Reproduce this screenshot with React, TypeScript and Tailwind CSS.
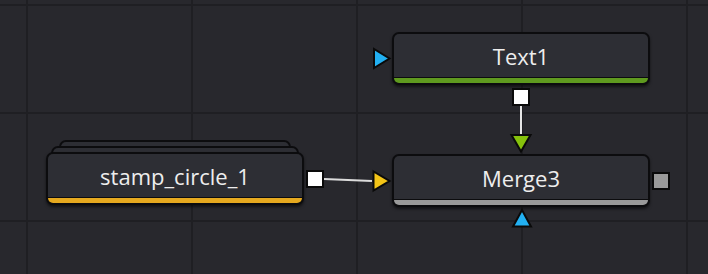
import React from "react";

type NodeProps = {
  x: number;
  y: number;
  label: string;
  bar: string;
  stacked?: boolean;
};

function Node({ x, y, label, bar, stacked }: NodeProps) {
  return (
    <div className="absolute w-[258px] h-[53px]" style={{ left: x, top: y }}>
      {stacked && (
        <>
          <div className="absolute left-[13px] right-[13px] top-[-12px] h-[30px] rounded-[7px] bg-[#0c0c0e] p-[2px]">
            <div className="h-full rounded-[5px] bg-[#2d2e34]" />
          </div>
          <div className="absolute left-[5px] right-[5px] top-[-6px] h-[30px] rounded-[7px] bg-[#0c0c0e] p-[2px]">
            <div className="h-full rounded-[5px] bg-[#2d2e34]" />
          </div>
        </>
      )}
      <div className="relative flex h-full w-full flex-col rounded-[7px] bg-[#0c0c0e] p-[2px] shadow-[0_2px_3px_rgba(0,0,0,0.55)]">
        <div className="flex h-[43px] items-center justify-center rounded-t-[5px] bg-[#2d2e34] text-[22px] leading-none text-[#ededed] [font-family:'Open_Sans',sans-serif]">
          <span>{label}</span>
        </div>
        <div className="h-[1px]" />
        <div className={`h-[5px] rounded-b-[5px] ${bar}`} />
      </div>
    </div>
  );
}

export default function App() {
  return (
    <div className="relative h-[274px] w-[708px] overflow-hidden bg-[#28282d] bg-[linear-gradient(to_right,#1f1f23_2px,transparent_2px),linear-gradient(to_bottom,#1f1f23_2px,transparent_2px)] bg-[size:165px_108px] bg-[position:26px_4px]">
      <Node x={392} y={32} label="Text1" bar="bg-[#5f9a1f]" />
      <Node x={46} y={152} label="stamp_circle_1" bar="bg-[#e6a91f]" stacked />
      <Node x={392} y={154} label="Merge3" bar="bg-[#9a9a9a]" />

      <svg className="absolute left-0 top-0" width={708} height={274} viewBox="0 0 708 274">
        <line x1={324} y1={179} x2={372} y2={181} stroke="#dcdcdc" strokeWidth={2} />
        <line x1={521} y1={106} x2={521} y2={135} stroke="#e6e6e6" strokeWidth={2} />

        <polygon points="374,49 374,68 389.5,58.5" fill="#22b0f2" stroke="#0a0a0a" strokeWidth={2} />
        <polygon points="373.5,171.5 373.5,190.5 389.5,181" fill="#f3c417" stroke="#0a0a0a" strokeWidth={2} />
        <polygon points="511.5,135 530.5,135 521,151.5" fill="#86c20c" stroke="#0a0a0a" strokeWidth={2} />
        <polygon points="513,226.5 531,226.5 522,210" fill="#22b0f2" stroke="#0a0a0a" strokeWidth={2} />

        <rect x={307} y={171} width={16} height={16} fill="#ffffff" stroke="#0a0a0a" strokeWidth={2} />
        <rect x={513} y={89} width={16} height={16} fill="#ffffff" stroke="#0a0a0a" strokeWidth={2} />
        <rect x={653} y={173} width={16} height={16} fill="#9a9a9a" stroke="#0a0a0a" strokeWidth={2} />
      </svg>
    </div>
  );
}
